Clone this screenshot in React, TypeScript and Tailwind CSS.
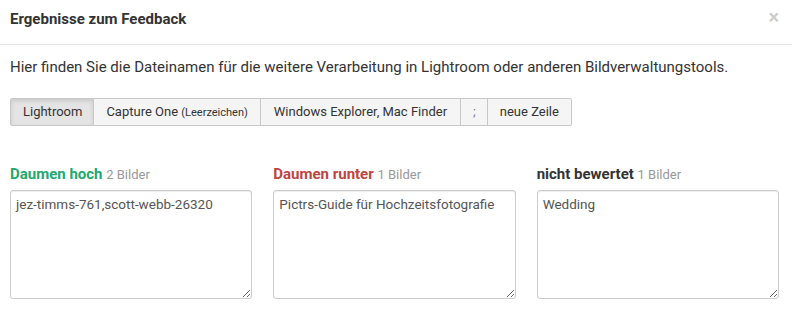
import React from "react";

const cols = [
  { title: "Daumen hoch", color: "text-[#22a86f]", count: "2 Bilder", value: "jez-timms-761,scott-webb-26320" },
  { title: "Daumen runter", color: "text-[#c0433e]", count: "1 Bilder", value: "Pictrs-Guide für Hochzeitsfotografie" },
  { title: "nicht bewertet", color: "text-[#333333]", count: "1 Bilder", value: "Wedding" },
];

export default function App() {
  return (
    <div className="w-[792px] h-[330px] bg-white text-[#333] font-['Roboto',sans-serif] overflow-hidden">
      <div className="flex items-start justify-between border-b border-[#e5e5e5] h-[45px] pl-[10px] pr-[13px] pt-[9px]">
        <h4 className="text-[15px] leading-[20px] font-bold text-[#333]">Ergebnisse zum Feedback</h4>
        <button className="text-[20px] leading-[20px] font-bold text-black opacity-20 -mt-[2px]">×</button>
      </div>
      <div className="pl-[10px] pr-[13px]">
        <p className="mt-[12px] text-[15px] leading-[20px] text-[#333]">
          Hier finden Sie die Dateinamen für die weitere Verarbeitung in Lightroom oder anderen Bildverwaltungstools.
        </p>
        <div className="mt-[21px] flex text-[13px] text-[#333]">
          <button className="h-[28px] pl-[12px] pr-[11px] border border-[#c8c8c8] bg-[#e4e4e4] shadow-[inset_0_2px_4px_rgba(0,0,0,0.12)] rounded-l-[2px]">Lightroom</button>
          <button className="h-[28px] px-[12px] border border-l-0 border-[#c8c8c8] bg-[#f5f5f5]">
            Capture One <span className="text-[11px]">(Leerzeichen)</span>
          </button>
          <button className="h-[28px] px-[13px] border border-l-0 border-[#c8c8c8] bg-[#f5f5f5]">Windows Explorer, Mac Finder</button>
          <button className="h-[28px] pl-[12px] pr-[11px] border border-l-0 border-[#c8c8c8] bg-[#f5f5f5] text-[#777]">;</button>
          <button className="h-[28px] px-[12px] border border-l-0 border-[#c8c8c8] bg-[#f5f5f5] rounded-r-[2px]">neue Zeile</button>
        </div>
        <div className="mt-[38px] grid grid-cols-3 gap-x-[21px]">
          {cols.map((c) => (
            <div key={c.title} className="flex flex-col">
              <div className="text-[15px] leading-[20px] h-[20px]">
                <span className={`font-bold ${c.color}`}>{c.title}</span>{" "}
                <span className="text-[13px] text-[#999]">{c.count}</span>
              </div>
              <textarea
                className="mt-[6px] h-[109px] w-full border border-[#ccc] rounded-[3px] px-[5px] py-[3px] text-[13.5px] leading-[20px] text-[#555] shadow-[inset_0_1px_1px_rgba(0,0,0,0.075)] outline-none resize-y font-['Roboto',sans-serif]"
                defaultValue={c.value}
              />
            </div>
          ))}
        </div>
      </div>
    </div>
  );
}
